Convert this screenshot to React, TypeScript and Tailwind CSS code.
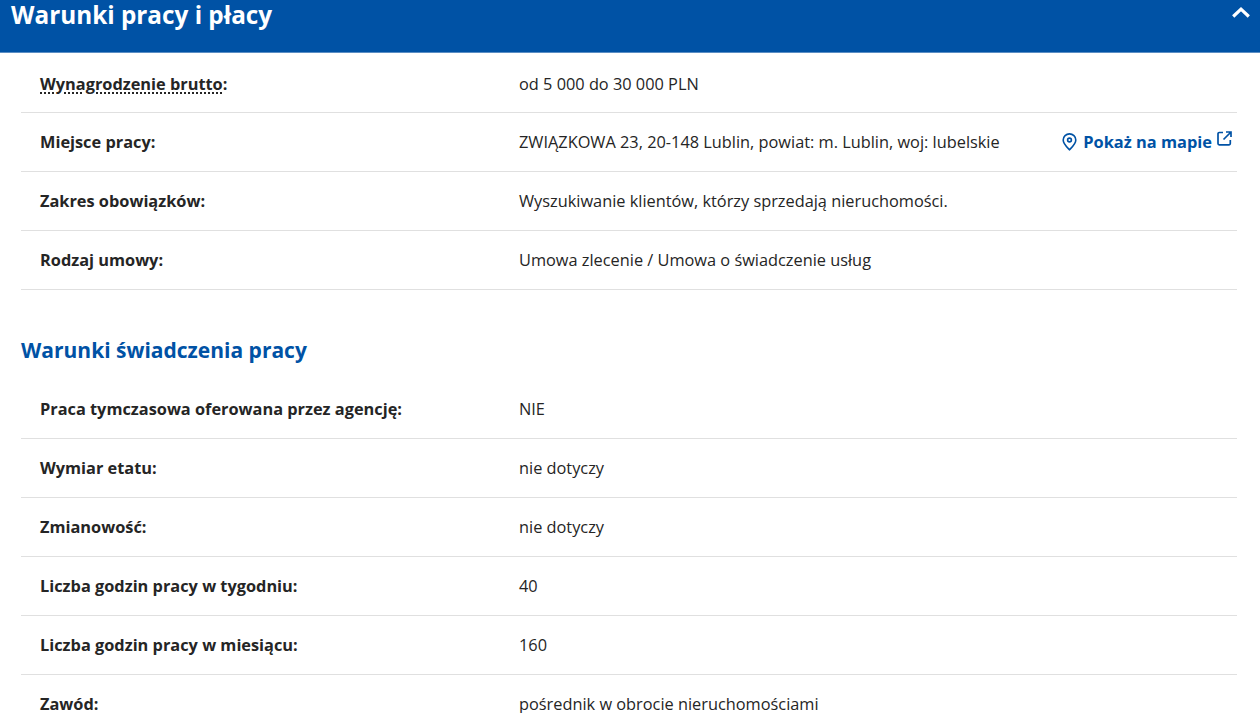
const pay = [
  { label: 'Wynagrodzenie brutto', value: 'od 5 000 do 30 000 PLN', hint: true },
  { label: 'Miejsce pracy', value: 'ZWIĄZKOWA 23, 20-148 Lublin, powiat: m. Lublin, woj: lubelskie', map: true },
  { label: 'Zakres obowiązków', value: 'Wyszukiwanie klientów, którzy sprzedają nieruchomości.' },
  { label: 'Rodzaj umowy', value: 'Umowa zlecenie / Umowa o świadczenie usług' },
];

const terms = [
  { label: 'Praca tymczasowa oferowana przez agencję', value: 'NIE' },
  { label: 'Wymiar etatu', value: 'nie dotyczy' },
  { label: 'Zmianowość', value: 'nie dotyczy' },
  { label: 'Liczba godzin pracy w tygodniu', value: '40' },
  { label: 'Liczba godzin pracy w miesiącu', value: '160' },
  { label: 'Zawód', value: 'pośrednik w obrocie nieruchomościami' },
];

type RowProps = { label: string; value: string; hint?: boolean; map?: boolean; last?: boolean };

function Row({ label, value, hint, map, last }: RowProps) {
  return (
    <div className={`flex h-[59px] items-center pl-[19px] ${hint ? 'pt-[2px]' : ''} ${last ? '' : 'border-b border-[#e0e0e0]'}`}>
      <div className="w-[479px] shrink-0 text-[16.33px] font-bold text-[#252525]">
        {hint ? (
          <>
            <span className="underline decoration-dotted decoration-[1.5px] underline-offset-[3px]">{label}</span>:
          </>
        ) : (
          `${label}:`
        )}
      </div>
      <div className="flex-1 whitespace-nowrap text-[16.33px] text-[#252525]">{value}</div>
      {map && (
        <a className="flex items-center pr-[5px] text-[16.4px] font-bold text-[#0052a5]">
          <svg width="15" height="18" viewBox="0 0 15 18" fill="none" stroke="currentColor" strokeWidth="1.6" className="mr-[6px]">
            <path d="M7.5 16.8C6.4 15.4 1.2 11.2 1.2 7a6.3 6.1 0 0 1 12.6 0c0 4.2-5.2 8.4-6.3 9.8z" strokeLinejoin="round" />
            <circle cx="7.5" cy="7" r="1.9" />
          </svg>
          Pokaż na mapie
          <svg width="15" height="15" viewBox="0 0 15 15" fill="none" stroke="currentColor" strokeWidth="1.7" className="mb-[7px] ml-[5px]">
            <path d="M6 1.5H2.2a1.2 1.2 0 0 0-1.2 1.2v9.9a1.2 1.2 0 0 0 1.2 1.2h9.9a1.2 1.2 0 0 0 1.2-1.2V9" />
            <path d="M9 1h5v5M14 1 6.5 8.5" />
          </svg>
        </a>
      )}
    </div>
  );
}

export default function App() {
  return (
    <div className="h-[713px] overflow-hidden bg-white font-['Open_Sans',sans-serif]">
      <div className="flex h-[53px] justify-between border-b border-[#5b8ec4] bg-[#0052a5] pr-[10px] pl-[11px] text-white">
        <h2 className="mt-[-3px] text-[24.3px] leading-[36px] font-bold">Warunki pracy i płacy</h2>
        <svg width="18" height="11" viewBox="0 0 18 11" fill="none" stroke="currentColor" strokeWidth="3.2" className="mt-[7px]">
          <path d="M1.2 9.5 9 2.2l7.8 7.3" />
        </svg>
      </div>
      <div className="pt-px pr-[23px] pl-[21px]">
        {pay.map((row) => (
          <Row key={row.label} {...row} />
        ))}
        <h3 className="mt-[40px] mb-[10px] text-[21px] leading-[40px] font-bold text-[#0052a5]">
          Warunki świadczenia pracy
        </h3>
        {terms.map((row, i) => (
          <Row key={row.label} {...row} last={i === terms.length - 1} />
        ))}
      </div>
    </div>
  );
}
